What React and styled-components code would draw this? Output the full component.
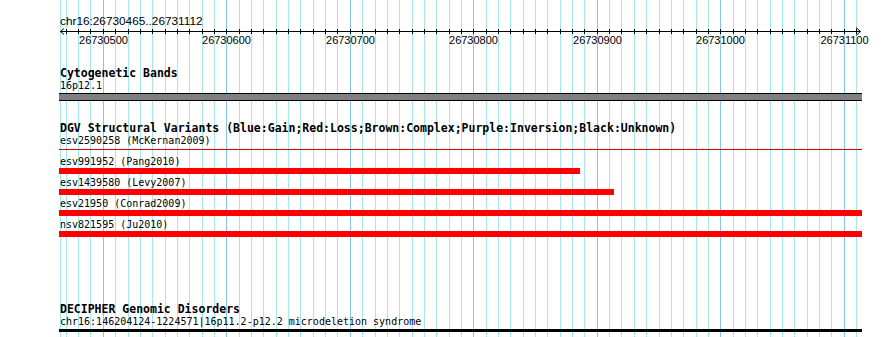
import React from "react";
import styled, { createGlobalStyle } from "styled-components";

const GlobalStyle = createGlobalStyle`
  html, body { margin: 0; padding: 0; background: #ffffff; }
  body { font-family: "Liberation Sans", Arial, sans-serif; color: #000; }
`;

/* scale: 26730500 sits at x=103.3, 10bp = 12.35px */
const TRACK_LEFT = 59;
const TRACK_WIDTH = 803;
const bpToX = (bp) => 103.3 + ((bp - 26730500) / 10) * 12.35;

const gridStops = [];
for (let bp = 26730470; bp <= 26731110; bp += 10) gridStops.push(bp);

const features = [
  { id: "esv991952 (Pang2010)", width: 521 },
  { id: "esv1439580 (Levy2007)", width: 555 },
  { id: "esv21950 (Conrad2009)", width: TRACK_WIDTH },
  { id: "nsv821595 (Ju2010)", width: TRACK_WIDTH },
];

const Page = styled.div`
  position: relative;
  width: 890px;
  height: 337px;
  overflow: hidden;
  background: #ffffff;
`;

const Backdrop = styled.svg`
  position: absolute;
  top: 0;
  left: 0;
  pointer-events: none;
`;

const Content = styled.div`
  position: relative;
  display: flex;
  flex-direction: column;
  align-items: flex-start;
  padding-left: ${TRACK_LEFT}px;
  width: ${TRACK_WIDTH}px;
`;

const Locus = styled.div`
  margin-top: 15px;
  padding-left: 1px;
  font-family: "Liberation Sans", Arial, sans-serif;
  font-size: 11.8px;
  line-height: 12px;
  white-space: nowrap;
`;

const RulerSvg = styled.svg`
  display: block;
  overflow: visible;
  font-family: "Liberation Sans", Arial, sans-serif;
  font-size: 11px;
`;

const TrackTitle = styled.div`
  margin-top: ${(p) => p.$gap}px;
  padding-left: 1px;
  font-family: "DejaVu Sans Mono", "Liberation Mono", monospace;
  font-weight: bold;
  font-size: 11.5px;
  line-height: 12px;
  white-space: nowrap;
`;

const FeatureLabel = styled.div`
  margin-top: ${(p) => p.$gap}px;
  padding-left: 1px;
  font-family: "DejaVu Sans Mono", "Liberation Mono", monospace;
  font-size: 10px;
  line-height: 10px;
  white-space: nowrap;
`;

const Band = styled.div`
  margin-top: 2px;
  width: ${TRACK_WIDTH}px;
  height: 6px;
  background: #808080;
  border-top: 1px solid #000;
  border-bottom: 1px solid #000;
`;

const FeatureBar = styled.div`
  margin-top: ${(p) => p.$gap}px;
  height: ${(p) => p.$height}px;
  background: ${(p) => p.$color};
`;

function GridLines() {
  return (
    <Backdrop width="890" height="337">
      <rect x="60" y="0" width="1" height="337" fill="#a8e6ee" />
      {gridStops.map((bp) => (
        <rect
          key={bp}
          x={Math.floor(bpToX(bp))}
          y="0"
          width="1"
          height="337"
          fill={bp % 100 === 0 ? "#84c6ec" : "#a8e6ee"}
        />
      ))}
    </Backdrop>
  );
}

function Ruler() {
  const lx = (bp) => Math.floor(bpToX(bp)) - TRACK_LEFT + 0.5;
  return (
    <RulerSvg width={TRACK_WIDTH} height="21">
      <line x1="1" y1="4.5" x2="801" y2="4.5" stroke="#000" />
      <polyline points="5,1.5 1.5,4.5 5,7.5" fill="none" stroke="#000" />
      <polyline points="797,0.5 801.5,4.5 797,8.5" fill="none" stroke="#000" />
      {gridStops.map((bp) => (
        <line key={bp} x1={lx(bp)} y1="2" x2={lx(bp)} y2="7" stroke="#000" />
      ))}
      {gridStops
        .filter((bp) => bp % 100 === 0)
        .map((bp) => (
          <text key={bp} x={lx(bp)} y="17" textAnchor="middle" fill="#000">
            {bp}
          </text>
        ))}
    </RulerSvg>
  );
}

export default function App() {
  return (
    <>
      <GlobalStyle />
      <Page>
        <GridLines />
        <Content>
          <Locus>chr16:26730465..26731112</Locus>
          <Ruler />

          <TrackTitle $gap={19}>Cytogenetic Bands</TrackTitle>
          <FeatureLabel $gap={2}>16p12.1</FeatureLabel>
          <Band />

          <TrackTitle $gap={21}>
            DGV Structural Variants (Blue:Gain;Red:Loss;Brown:Complex;Purple:Inversion;Black:Unknown)
          </TrackTitle>
          <FeatureLabel $gap={2}>esv2590258 (McKernan2009)</FeatureLabel>
          <FeatureBar $gap={3} $height={1} $color="#d00000" style={{ width: TRACK_WIDTH }} />
          {features.map((f, i) => (
            <React.Fragment key={f.id}>
              <FeatureLabel $gap={i === 0 ? 7 : 4}>{f.id}</FeatureLabel>
              <FeatureBar $gap={1} $height={6} $color="#ff0000" style={{ width: f.width }} />
            </React.Fragment>
          ))}

          <TrackTitle $gap={66}>DECIPHER Genomic Disorders</TrackTitle>
          <FeatureLabel $gap={2}>chr16:146204124-1224571|16p11.2-p12.2 microdeletion syndrome</FeatureLabel>
          <FeatureBar $gap={2} $height={3} $color="#000" style={{ width: TRACK_WIDTH }} />
        </Content>
      </Page>
    </>
  );
}
